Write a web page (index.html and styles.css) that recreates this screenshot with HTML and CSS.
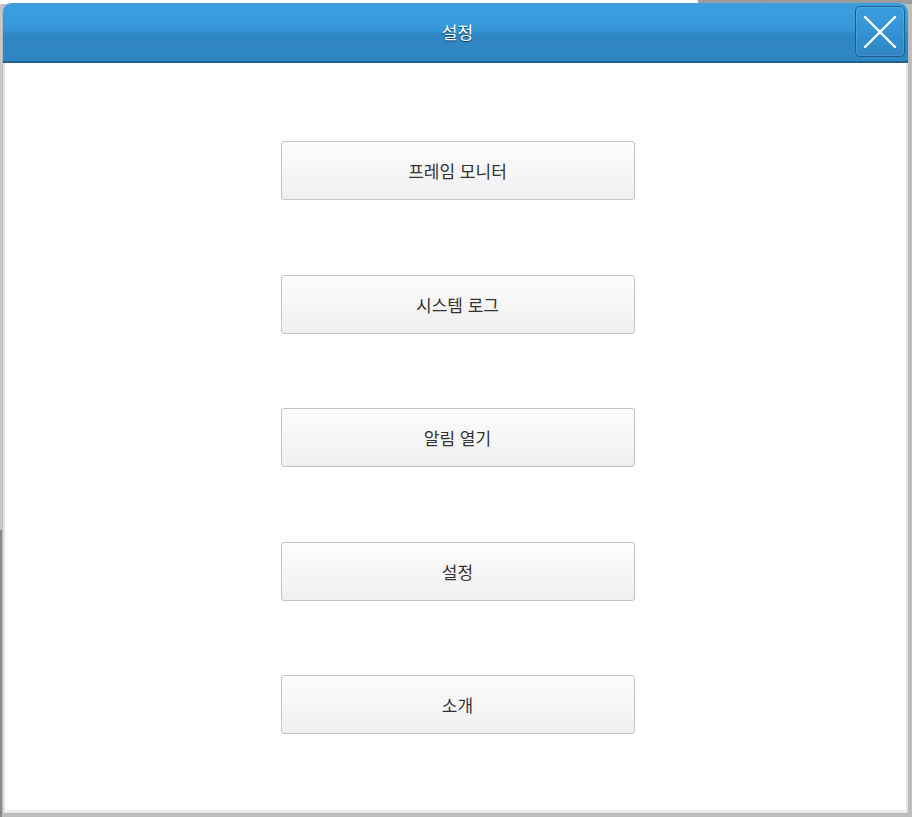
FILE: index.html
```html
<!DOCTYPE html>
<html lang="ko">
<head>
<meta charset="utf-8">
<title>설정</title>
<link rel="stylesheet" href="styles.css">
</head>
<body>
<div class="window">
  <header class="titlebar">
    <span class="title">설정</span>
    <button class="close" aria-label="닫기">
      <svg width="36" height="36" viewBox="0 0 36 36"><path d="M3 3 L33 33 M33 3 L3 33" stroke="#fff" stroke-width="2.4" stroke-linecap="round" fill="none"/></svg>
    </button>
  </header>
  <main class="content">
    <button class="menu-btn">프레임 모니터</button>
    <button class="menu-btn">시스템 로그</button>
    <button class="menu-btn">알림 열기</button>
    <button class="menu-btn">설정</button>
    <button class="menu-btn">소개</button>
  </main>
</div>
</body>
</html>
```
FILE: styles.css
```css
html, body {
  margin: 0;
  padding: 0;
}
body {
  width: 912px;
  height: 817px;
  overflow: hidden;
  background:
    linear-gradient(to right, #ffffff 0, #ffffff 698px, #9c9c9c 698px) top / 100% 4px no-repeat,
    linear-gradient(to bottom, #c8c8c8 0, #c8c8c8 530px, #8a8a8a 530px) left / 2px 100% no-repeat,
    #bdbdbd;
  font-family: "Noto Sans CJK KR", "Noto Sans", "DejaVu Sans", sans-serif;
  padding-top: 3px;
  padding-left: 2px;
  box-sizing: border-box;
}
.window {
  width: 907px;
  height: 811px;
  background: #ffffff;
  border-radius: 9px 9px 0 0;
  border: 1px solid #b9b9b9;
  border-top: none;
  box-sizing: border-box;
  display: flex;
  flex-direction: column;
  box-shadow: inset 2px 0 0 #e2e2e2, inset -2px 0 0 #e6e6e6, inset 0 -3px 0 #ececec;
  overflow: hidden;
}
.titlebar {
  height: 60px;
  flex: none;
  box-sizing: border-box;
  margin: 0 -1px;
  border-radius: 9px 9px 0 0;
  background: linear-gradient(to bottom, #3c9fe0 0%, #3597d8 45%, #2f86c2 55%, #2e86c3 100%);
  border-bottom: 2px solid #1f5f92;
  display: flex;
  align-items: center;
  justify-content: center;
  position: relative;
}
.title {
  color: #ffffff;
  font-size: 17px;
  text-shadow: 0 1px 1px rgba(0, 30, 70, 0.75);
  margin-left: 4px;
  margin-bottom: 2px;
}
.close {
  position: absolute;
  right: 4px;
  top: 3px;
  width: 50px;
  height: 51px;
  padding: 0;
  border: 1px solid #1d5e91;
  border-radius: 5px;
  background: linear-gradient(to bottom, #3a9cde 0%, #3493d4 50%, #2f86c3 100%);
  box-shadow: inset 0 0 0 1px rgba(255, 255, 255, 0.12);
  display: flex;
  align-items: center;
  justify-content: center;
  cursor: pointer;
}
.content {
  flex: 1;
  display: flex;
  flex-direction: column;
  align-items: center;
  padding-top: 78px;
  padding-left: 4px;
  gap: 74.5px;
}
.menu-btn {
  width: 354px;
  height: 59px;
  flex: none;
  border: 1px solid #c4c4c4;
  border-radius: 3px;
  background: linear-gradient(to bottom, #fdfdfd 0%, #f6f6f6 50%, #efefef 100%);
  font-family: "Noto Sans CJK KR", "Noto Sans", "DejaVu Sans", sans-serif;
  font-size: 17px;
  color: #333333;
  padding: 0;
  cursor: pointer;
}
```
